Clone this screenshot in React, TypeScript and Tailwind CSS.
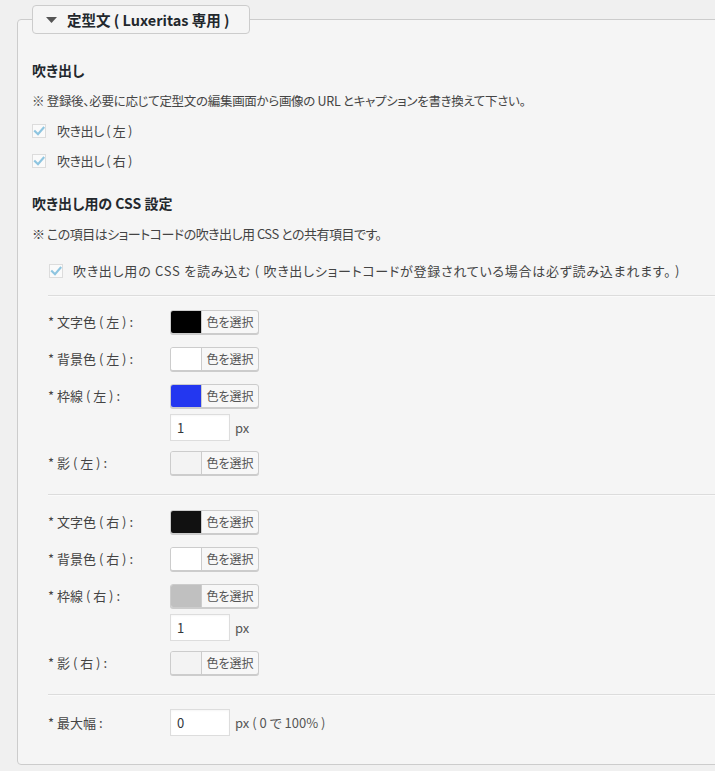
import React from "react";

function Check() {
  return (
    <span className="flex h-[14px] w-[14px] shrink-0 items-center justify-center border border-[#dcdcdc] bg-[#fafafa]">
      <svg width="12" height="12" viewBox="0 0 12 12">
        <path d="M2 6.2 L5 9.2 L10.5 2.8" fill="none" stroke="#8ec5e0" strokeWidth="2.2" strokeLinecap="square" />
      </svg>
    </span>
  );
}

function ColorBtn({ swatch }: { swatch: string }) {
  return (
    <div className="flex h-[24px] w-[89px] overflow-hidden rounded-[3px] border border-[#ccc] bg-[#f7f7f7] shadow-[0_1px_0_#ccc]">
      <span className={"h-full w-[31px] border-r border-[#ccc] " + swatch} />
      <span className="flex flex-1 items-center justify-center text-[12px] leading-[22px] text-[#555]">色を選択</span>
    </div>
  );
}

function NumInput({ value, suffix }: { value: string; suffix: string }) {
  return (
    <div className="flex items-center gap-[5px]">
      <div className="flex h-[27px] w-[60px] items-center border border-[#ddd] bg-white pl-[6px] text-[13px] text-[#32373c] shadow-[inset_0_1px_2px_rgba(0,0,0,0.04)]">
        {value}
      </div>
      <span className="text-[13px] text-[#555]">{suffix}</span>
    </div>
  );
}

function Row({ label, children }: { label: string; children: React.ReactNode }) {
  return (
    <div className="flex items-start">
      <div className="flex h-[24px] w-[122px] shrink-0 items-center text-[13px] text-[#444]">{label}</div>
      <div className="flex flex-col items-start">{children}</div>
    </div>
  );
}

function Hr() {
  return <div className="border-t border-b border-t-[#dcdcdc] border-b-[#fafafa]" />;
}

function Block({ side, c1, c2, c3 }: { side: string; c1: string; c2: string; c3: string }) {
  return (
    <div className="flex flex-col gap-[13px]">
      <Row label={`* 文字色 ( ${side} ) :`}>
        <ColorBtn swatch={c1} />
      </Row>
      <Row label={`* 背景色 ( ${side} ) :`}>
        <ColorBtn swatch={c2} />
      </Row>
      <Row label={`* 枠線 ( ${side} ) :`}>
        <ColorBtn swatch={c3} />
        <div className="mt-[6px] mb-[-3px]">
          <NumInput value="1" suffix="px" />
        </div>
      </Row>
      <Row label={`* 影 ( ${side} ) :`}>
        <ColorBtn swatch="bg-[#f3f3f3]" />
      </Row>
    </div>
  );
}

export default function App() {
  return (
    <div className="h-[771px] w-[715px] overflow-hidden bg-[#f0f0f0] pl-[17px] pt-[5px] text-[#444] [font-family:'Noto_Sans_CJK_JP',sans-serif] [font-feature-settings:'palt']">
      <fieldset className="w-[760px] rounded-[4px] border border-[#ccc] bg-[#f5f5f5] pb-[28px] pl-[14px]">
        <legend>
          <div className="flex h-[29px] items-center gap-[10px] rounded-[4px] border border-[#ccc] bg-[#f5f5f5] pl-[13px] pr-[19px]">
            <svg width="11" height="6" viewBox="0 0 11 6">
              <path d="M0 0H11L5.5 6Z" fill="#555" />
            </svg>
            <span className="text-[14.5px] font-bold leading-[20px] text-[#23282d]">定型文 ( Luxeritas 専用 )</span>
          </div>
        </legend>

        <div className="mt-[26px] text-[14px] font-bold leading-[20px] text-[#23282d]">吹き出し</div>
        <div className="mt-[11px] text-[12.5px] leading-[20px] tracking-[-0.3px]">
          ※ 登録後、必要に応じて定型文の編集画面から画像の URL とキャプションを書き換えて下さい。
        </div>
        <div className="mt-[10px] flex h-[20px] items-center gap-[11px]">
          <Check />
          <span className="text-[13px] tracking-[-0.4px]">吹き出し ( 左 )</span>
        </div>
        <div className="mt-[10px] flex h-[20px] items-center gap-[11px]">
          <Check />
          <span className="text-[13px] tracking-[-0.4px]">吹き出し ( 右 )</span>
        </div>

        <div className="mt-[22px] text-[14px] font-bold leading-[20px] text-[#23282d]">吹き出し用の CSS 設定</div>
        <div className="mt-[11px] text-[13px] leading-[20px] tracking-[-0.5px]">
          ※ この項目はショートコードの吹き出し用 CSS との共有項目です。
        </div>

        <div className="ml-[16px]">
          <div className="mt-[17px] flex h-[20px] items-center gap-[10px] pl-[1px]">
            <Check />
            <span className="text-[13px] tracking-[0.75px]">
              吹き出し用の CSS を読み込む ( 吹き出しショートコードが登録されている場合は必ず読み込まれます。 )
            </span>
          </div>
          <div className="mt-[14px]">
            <Hr />
          </div>
          <div className="mt-[13px]">
            <Block side="左" c1="bg-[#000000]" c2="bg-[#ffffff]" c3="bg-[#2337f0]" />
          </div>
          <div className="mt-[19px]">
            <Hr />
          </div>
          <div className="mt-[14px]">
            <Block side="右" c1="bg-[#111111]" c2="bg-[#ffffff]" c3="bg-[#c0c0c0]" />
          </div>
          <div className="mt-[19px]">
            <Hr />
          </div>
          <div className="mt-[13px] flex items-center">
            <div className="w-[122px] shrink-0 text-[13px] text-[#444]">* 最大幅 :</div>
            <NumInput value="0" suffix="px ( 0 で 100% )" />
          </div>
        </div>
      </fieldset>
    </div>
  );
}
